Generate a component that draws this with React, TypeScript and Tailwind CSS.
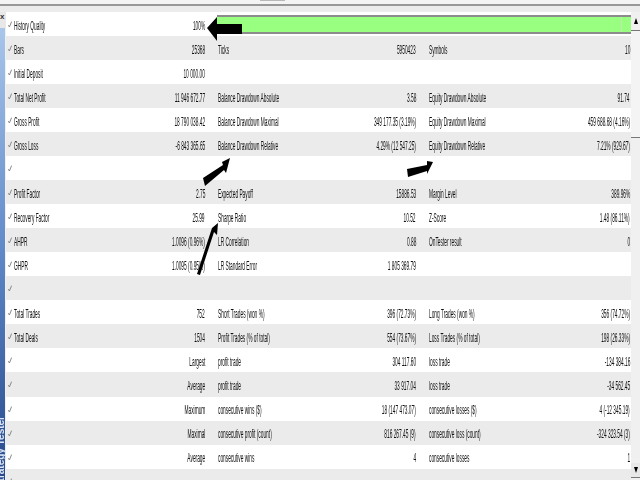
const rows: string[][] = [
  ['History Quality', '100%'],
  ['Bars', '25368', 'Ticks', '5950423', 'Symbols', '10'],
  ['Initial Deposit', '10 000.00', '', '', '', ''],
  ['Total Net Profit', '11 946 672.77', 'Balance Drawdown Absolute', '3.58', 'Equity Drawdown Absolute', '91.74'],
  ['Gross Profit', '18 790 038.42', 'Balance Drawdown Maximal', '349 177.35 (3.19%)', 'Equity Drawdown Maximal', '459 688.68 (4.16%)'],
  ['Gross Loss', '-6 843 365.65', 'Balance Drawdown Relative', '4.29% (12 547.25)', 'Equity Drawdown Relative', '7.21% (929.67)'],
  ['', '', '', '', '', ''],
  ['Profit Factor', '2.75', 'Expected Payoff', '15886.53', 'Margin Level', '389.96%'],
  ['Recovery Factor', '25.99', 'Sharpe Ratio', '10.52', 'Z-Score', '1.48 (86.11%)'],
  ['AHPR', '1.0096 (0.96%)', 'LR Correlation', '0.88', 'OnTester result', '0'],
  ['GHPR', '1.0095 (0.95%)', 'LR Standard Error', '1 805 369.79', '', ''],
  ['', '', '', '', '', ''],
  ['Total Trades', '752', 'Short Trades (won %)', '396 (72.73%)', 'Long Trades (won %)', '356 (74.72%)'],
  ['Total Deals', '1504', 'Profit Trades (% of total)', '554 (73.67%)', 'Loss Trades (% of total)', '198 (26.33%)'],
  ['', 'Largest', 'profit trade', '304 117.60', 'loss trade', '-134 384.16'],
  ['', 'Average', 'profit trade', '33 917.04', 'loss trade', '-34 562.45'],
  ['', 'Maximum', 'consecutive wins ($)', '18 (147 473.07)', 'consecutive losses ($)', '4 (-12 345.19)'],
  ['', 'Maximal', 'consecutive profit (count)', '816 267.45 (9)', 'consecutive loss (count)', '-324 323.54 (3)'],
  ['', 'Average', 'consecutive wins', '4', 'consecutive losses', '1'],
  ['', '', '', '', '', ''],
];

const Label = ({ text }: { text: string }) => (
  <div className="flex justify-start min-w-0 pt-[3px]">
    <span className="origin-left scale-x-[0.37] whitespace-nowrap">{text}</span>
  </div>
);

const Value = ({ text }: { text: string }) => (
  <div className="flex justify-end min-w-0 pt-[3px]">
    <span className="origin-right scale-x-[0.37] whitespace-nowrap shrink-0">{text}</span>
  </div>
);

const Check = () => (
  <svg className="absolute left-[2px] top-[9px]" width="4" height="7" viewBox="0 0 4 7">
    <path d="M0.4 4.2 L1.4 6 L3.6 0.6" fill="none" stroke="#888" strokeWidth="1" />
  </svg>
);

const Arrows = () => (
  <svg className="absolute left-0 top-0 pointer-events-none" width="640" height="480" viewBox="0 0 640 480">
    <polygon points="207,28 217,17 217,24 242,24 242,34 217,34 217,41" fill="#000" />
    <polygon points="203,178 223,165 222,162 230,158 226,173 224,170 205,186" fill="#000" />
    <polygon points="407,169 427,165 427,161 433,162 427,174 427,171 408,177" fill="#000" />
    <polygon points="218,223 217,235 214,232 200,275 197,274 211,231 212,228" fill="#000" />
  </svg>
);

export default function App() {
  return (
    <div className="relative w-[640px] h-[480px] overflow-hidden bg-[#f0f0f0] font-['Liberation_Sans',sans-serif] text-[13px] text-[#111]">
      {/* Top edge */}
      <div className="h-[4px] bg-[#f4f4f4] flex">
        <div className="ml-[260px] w-[25px] h-[1px] bg-[#b8b8b8]" />
      </div>
      <div className="h-[2px] bg-[#989898]" />
      <div className="h-[6px] bg-[#ececec]" />

      <div className="flex h-[468px]">
        {/* Strategy Tester strip */}
        <div className="relative w-[6px] shrink-0 overflow-hidden flex flex-col">
          <div className="h-[16px] bg-[#e8e8e8] text-[8px] leading-[10px] font-bold text-[#333]">x</div>
          <div className="flex-1 w-[5px] bg-linear-to-b from-[#a9c6ea] via-[#5f88c8] to-[#27498c]" />
          <div className="absolute left-[-5px] bottom-[-8px] [writing-mode:vertical-rl] rotate-180 text-[10px] leading-[12px] font-bold text-[#dbe5f5] whitespace-nowrap">
            Strategy Tester
          </div>
        </div>

        {/* Report table */}
        <div className="w-[625px] shrink-0 bg-white blur-[0.5px]">
          {rows.map((row, i) => (
            <div
              key={i}
              className={`relative h-[24.04px] grid grid-cols-[100px_91px_105px_106px_107px_107px] pl-[8px] items-center leading-[20px] ${i % 2 === 1 ? 'bg-[#ebebeb]' : 'bg-white'}`}
            >
              <Check />
              <Label text={row[0]} />
              <Value text={row[1]} />
              {i === 0 ? (
                <div className="col-span-4 ml-[12px] mr-[-1px] h-[19px] border-y-2 border-[#8c8c8c] bg-[#99ff80] flex justify-end">
                  <div className="w-[1px] mr-[9px] bg-[#c0e8b0]" />
                </div>
              ) : (
                <>
                  <div className="pl-[13px] min-w-0"><Label text={row[2]} /></div>
                  <Value text={row[3]} />
                  <div className="pl-[13px] min-w-0"><Label text={row[4]} /></div>
                  <Value text={row[5]} />
                </>
              )}
            </div>
          ))}
        </div>

        {/* Scrollbar */}
        <div className="w-[9px] shrink-0 flex flex-col bg-[#f0f0f0]">
          <div className="h-[18px] flex items-center justify-center">
            <div className="w-0 h-0 border-x-[2.5px] border-x-transparent border-b-[6px] border-b-black" />
          </div>
          <div className="h-[108px] border-y border-[#777] bg-[#f4f4f4]" />
          <div className="flex-1" />
          <div className="h-[15px] mb-[2px] border-b border-[#777] bg-[#e8e8e8] flex items-center justify-center">
            <div className="w-0 h-0 border-x-[2.5px] border-x-transparent border-t-[6px] border-t-black" />
          </div>
        </div>
      </div>

      <Arrows />
    </div>
  );
}
